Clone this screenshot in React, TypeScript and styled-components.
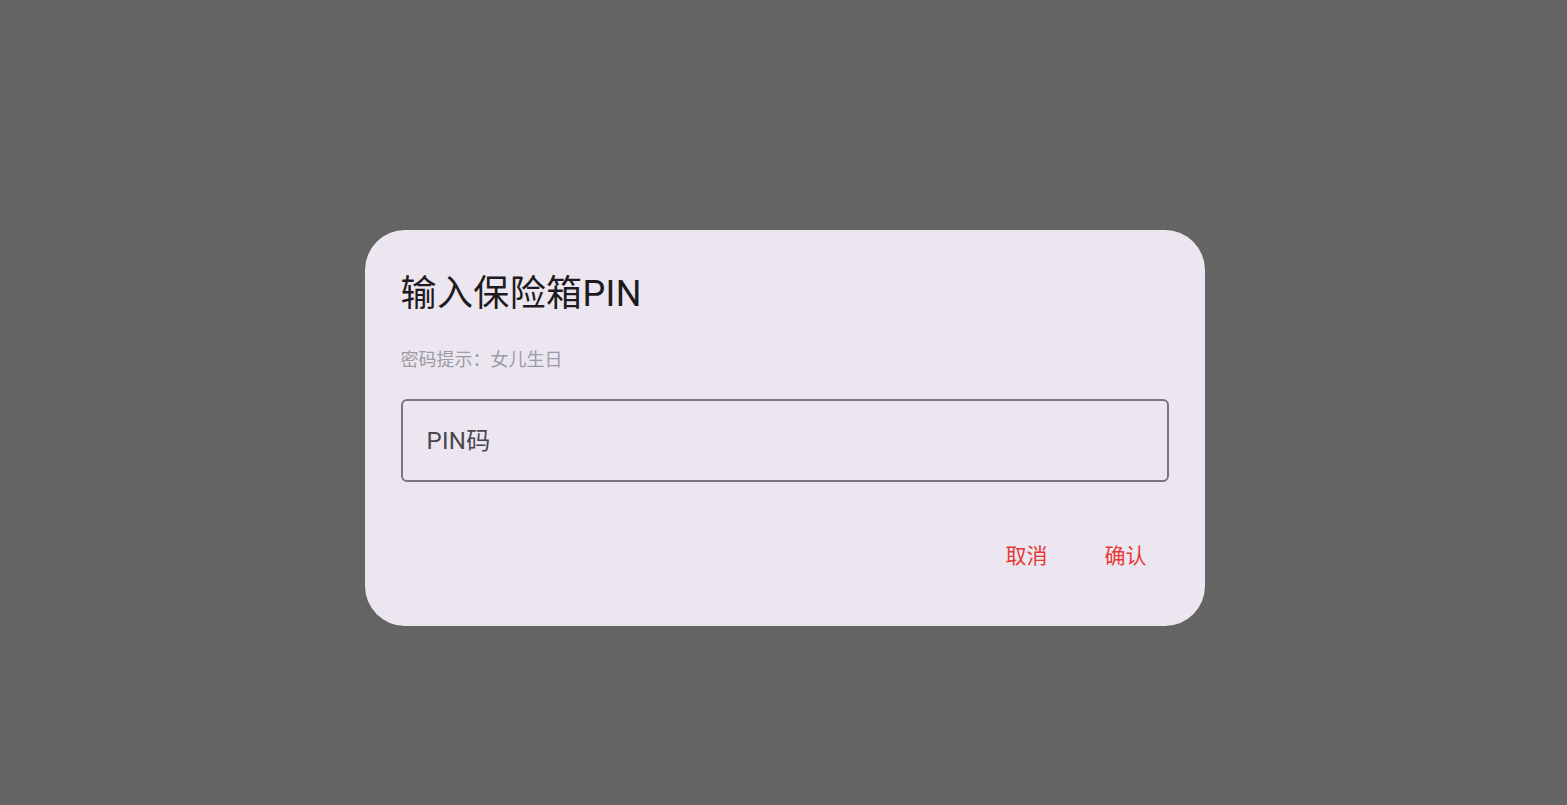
import React from "react";
import styled, { createGlobalStyle } from "styled-components";

const GlobalStyle = createGlobalStyle`
  html, body {
    margin: 0;
    padding: 0;
    height: 100%;
  }
  body {
    background: #646464;
    font-family: "Roboto", "Noto Sans CJK SC", sans-serif;
  }
`;

const Backdrop = styled.div`
  display: flex;
  justify-content: center;
  align-items: flex-start;
  width: 100vw;
  height: 100vh;
  padding: 230px 0 0 2px;
  box-sizing: border-box;
  background: #646464;
`;

const Dialog = styled.div`
  display: flex;
  flex-direction: column;
  width: 840px;
  box-sizing: border-box;
  padding: 42px 36px 46px;
  background: #ece6f0;
  border-radius: 40px;
`;

const Title = styled.h2`
  margin: 0;
  font-size: 36px;
  line-height: 44px;
  font-weight: 400;
  letter-spacing: 0.4px;
  color: #1d1b20;
`;

const Hint = styled.p`
  margin: 32px 0 0;
  font-size: 18px;
  line-height: 24px;
  color: #9c9ca4;
`;

const Input = styled.input`
  margin-top: 27px;
  height: 83px;
  box-sizing: border-box;
  padding: 0 24px;
  border: 2px solid #79747e;
  border-radius: 6px;
  background: transparent;
  font-family: "Roboto", "Noto Sans CJK SC", sans-serif;
  font-size: 24px;
  letter-spacing: 0.3px;
  color: #49454f;
  outline: none;

  &::placeholder {
    color: #49454f;
    opacity: 1;
  }
`;

const Actions = styled.div`
  display: flex;
  justify-content: flex-end;
  gap: 13px;
  margin-top: 50px;
`;

const TextButton = styled.button`
  height: 48px;
  padding: 0 22px;
  border: none;
  border-radius: 24px;
  background: transparent;
  font-family: "Roboto", "Noto Sans CJK SC", sans-serif;
  font-size: 21px;
  line-height: 48px;
  color: #e53935;
  cursor: pointer;
`;

export default function App() {
  return (
    <>
      <GlobalStyle />
      <Backdrop>
        <Dialog>
          <Title>输入保险箱PIN</Title>
          <Hint>密码提示：女儿生日</Hint>
          <Input placeholder="PIN码" />
          <Actions>
            <TextButton>取消</TextButton>
            <TextButton>确认</TextButton>
          </Actions>
        </Dialog>
      </Backdrop>
    </>
  );
}
